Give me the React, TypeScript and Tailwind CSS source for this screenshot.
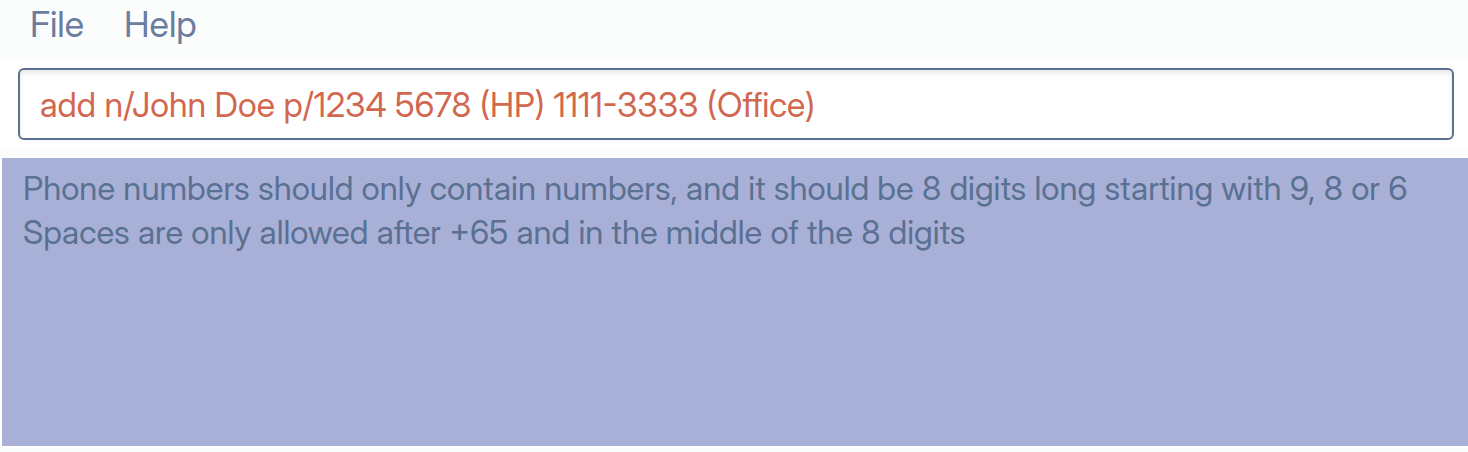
export default function App() {
  return (
    <main className="flex min-h-screen flex-col bg-[#fbfdfd] font-['Inter_Display','Inter_Tight','Inter',sans-serif] text-[33px] text-[#5a7192]">
      <nav className="flex items-start gap-10 px-[30px] pt-1 pb-[14px] text-[36px] leading-10 text-[#6b7c9f]">
        <button type="button">File</button>
        <button type="button">Help</button>
      </nav>
      <form className="bg-white pt-[10px] pr-[14px] pb-[10px] pl-[18px]" onSubmit={(e) => e.preventDefault()}>
        <input
          type="text"
          aria-label="Command"
          spellCheck={false}
          defaultValue="add n/John Doe p/1234 5678 (HP) 1111-3333 (Office)"
          className="block h-[72px] w-full rounded-md border-2 border-[#5b7092] bg-white px-5 text-[34px] text-[#d2674f] shadow-[inset_0_4px_6px_-1px_#e8e8ea] outline-none"
        />
      </form>
      <section
        aria-label="Result"
        className="mt-[6px] mb-1 flex-1 border-y-2 border-l-2 border-white bg-[#a9b0d7] px-[21px] pt-2 leading-11"
      >
        <p>Phone numbers should only contain numbers, and it should be 8 digits long starting with 9, 8 or 6</p>
        <p>Spaces are only allowed after +65 and in the middle of the 8 digits</p>
      </section>
    </main>
  );
}
